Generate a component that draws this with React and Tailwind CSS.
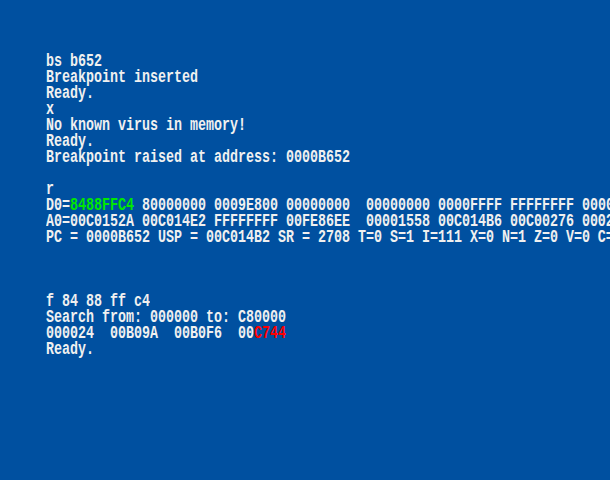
const lines = [
  ["bs b652"],
  ["Breakpoint inserted"],
  ["Ready."],
  ["x"],
  ["No known virus in memory!"],
  ["Ready."],
  ["Breakpoint raised at address: 0000B652"],
  [""],
  ["r"],
  [
    "D0=",
    { t: "8488FFC4", c: "text-[#00e800]" },
    " 80000000 0009E800 00000000  00000000 0000FFFF FFFFFFFF 00000000",
  ],
  ["A0=00C0152A 00C014E2 FFFFFFFF 00FE86EE  00001558 00C014B6 00C00276 00020000"],
  ["PC = 0000B652 USP = 00C014B2 SR = 2708 T=0 S=1 I=111 X=0 N=1 Z=0 V=0 C=0"],
  [""],
  [""],
  [""],
  ["f 84 88 ff c4"],
  ["Search from: 000000 to: C80000"],
  ["000024  00B09A  00B0F6  00", { t: "C744", c: "text-[#ff0000]" }],
  ["Ready."],
];

export default function App() {
  return (
    <div className="w-[610px] h-[480px] overflow-hidden bg-[#0050a0] pt-[54px] pl-[46px] text-[#f0f0f0] font-['Liberation_Mono',monospace] font-bold text-[13.333px]">
      {lines.map((parts, i) => (
        <div key={i} className="h-4 leading-4 whitespace-pre">
          <span className="inline-block scale-y-[1.4] origin-center">
            {parts.map((p, j) =>
              typeof p === "string" ? (
                <span key={j}>{p}</span>
              ) : (
                <span key={j} className={p.c}>{p.t}</span>
              )
            )}
          </span>
        </div>
      ))}
    </div>
  );
}
